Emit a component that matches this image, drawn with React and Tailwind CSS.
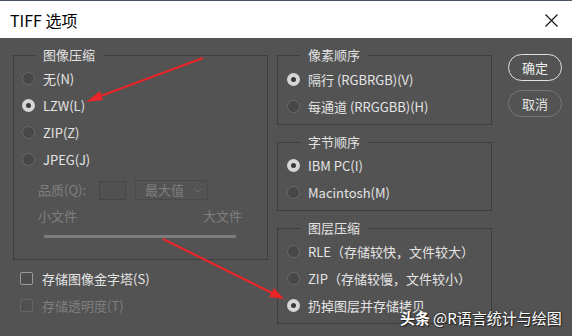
import React from 'react';

const font = { fontFamily: '"Noto Sans CJK SC", "Noto Sans", sans-serif' };

const Radio = ({ checked, label }) => (
  <div className="flex items-center h-[27px] gap-[8px]">
    {checked ? (
      <span className="w-[13px] h-[13px] rounded-full bg-[#d6d6d6] flex items-center justify-center">
        <span className="w-[5px] h-[5px] rounded-full bg-[#3a3a3a]" />
      </span>
    ) : (
      <span className="w-[13px] h-[13px] rounded-full bg-[#474747] border border-[#6a6a6a]" />
    )}
    <span className="text-[13px] leading-none text-[#e4e4e4]">{label}</span>
  </div>
);

const Group = ({ title, children, className = '' }) => (
  <fieldset className={`border border-[#3d3d3d] ${className}`}>
    <legend className="ml-[13px] px-[8px] text-[13px] leading-[18px] text-[#e2e2e2]">{title}</legend>
    {children}
  </fieldset>
);

const App = () => {
  return (
    <div className="relative w-[572px] h-[336px] overflow-hidden bg-[#535353]" style={font}>
      {/* title bar */}
      <div className="h-[38px] bg-white border-t border-[#4a5466] flex items-center justify-between pl-[10px] pr-[14px]">
        <span className="text-[16px] text-black">TIFF 选项</span>
        <svg width="13" height="13" viewBox="0 0 13 13" className="mt-[1px]">
          <path d="M0.5 0.5 L12.5 12.5 M12.5 0.5 L0.5 12.5" stroke="#111" strokeWidth="1.1" fill="none" />
        </svg>
      </div>

      <div className="flex pl-[13px] pt-[8px]">
        {/* left column */}
        <div className="w-[255px] flex flex-col">
          <Group title="图像压缩" className="h-[214px] pl-[8px] pr-[25px] pt-[1px]">
            <Radio label="无(N)" />
            <Radio checked label="LZW(L)" />
            <Radio label="ZIP(Z)" />
            <Radio label="JPEG(J)" />
            <div className="flex items-center mt-[7px] pl-[16px] h-[20px] text-[13px] text-[#7f7f7f]">
              <span className="w-[61px]">品质(Q):</span>
              <span className="w-[27px] h-[19px] border border-[#464646] bg-[#515151]" />
              <span className="ml-[9px] w-[73px] h-[20px] border border-[#4a4a4a] rounded-[2px] flex items-center justify-between pl-[9px] pr-[5px]">
                <span>最大值</span>
                <svg width="8" height="5" viewBox="0 0 8 5">
                  <path d="M0.5 0.5 L4 4 L7.5 0.5" stroke="#6e6e6e" fill="none" />
                </svg>
              </span>
            </div>
            <div className="flex justify-between pl-[16px] mt-[8px] text-[13px] leading-[16px] text-[#7f7f7f]">
              <span>小文件</span>
              <span>大文件</span>
            </div>
            <div className="ml-[22px] mr-[6px] mt-[11px] h-[3px] bg-[#7c7c7c]" />
          </Group>
          <div className="mt-[5px] pl-[7px]">
            <div className="flex items-center h-[27px] gap-[9px]">
              <span className="w-[13px] h-[13px] border border-[#9a9a9a] rounded-[2px] bg-[#4d4d4d]" />
              <span className="text-[13px] leading-none text-[#e4e4e4]">存储图像金字塔(S)</span>
            </div>
            <div className="flex items-center h-[27px] gap-[9px]">
              <span className="w-[13px] h-[13px] border border-[#676767] rounded-[2px] bg-[#505050]" />
              <span className="text-[13px] leading-none text-[#7f7f7f]">存储透明度(T)</span>
            </div>
          </div>
        </div>

        {/* middle column */}
        <div className="ml-[9px] w-[215px] flex flex-col gap-[8px]">
          <Group title="像素顺序" className="pl-[9px] pt-[2px] pb-[4px]">
            <Radio checked label="隔行 (RGBRGB)(V)" />
            <Radio label="每通道 (RRGGBB)(H)" />
          </Group>
          <Group title="字节顺序" className="pl-[9px] pt-[1px] pb-[4px]">
            <Radio checked label="IBM PC(I)" />
            <Radio label="Macintosh(M)" />
          </Group>
          <Group title="图层压缩" className="pl-[9px] pt-[1px] pb-[4px]">
            <Radio label="RLE（存储较快，文件较大）" />
            <Radio label="ZIP（存储较慢，文件较小）" />
            <Radio checked label="扔掉图层并存储拷贝" />
          </Group>
        </div>

        {/* buttons */}
        <div className="ml-[16px] pt-[8px] flex flex-col gap-[9px]">
          <button className="w-[54px] h-[27px] rounded-full border-[1.5px] border-[#e2e2e2] text-[13px] text-[#f0f0f0]">确定</button>
          <button className="w-[54px] h-[27px] rounded-full border border-[#767676] text-[13px] text-[#e4e4e4]">取消</button>
        </div>
      </div>

      {/* red arrows */}
      <svg className="absolute inset-0 pointer-events-none" width="572" height="336">
        <line x1="203" y1="58" x2="98" y2="97" stroke="#e8262a" strokeWidth="2.2" />
        <polygon points="86,102 100,91 103,100" fill="#e8262a" />
        <line x1="163" y1="239" x2="272" y2="293" stroke="#e8262a" strokeWidth="2.2" />
        <polygon points="284,299 269,297 274,288" fill="#e8262a" />
      </svg>

      {/* watermark */}
      <div className="absolute left-[400px] top-[310px] flex items-center gap-[3px] whitespace-nowrap text-[15px] leading-none text-white [text-shadow:0_0_2px_#222,1px_1px_1px_#222]">
        <span className="font-bold">头条</span>
        <span>@R语言统计与绘图</span>
      </div>
    </div>
  );
};

export default App;
